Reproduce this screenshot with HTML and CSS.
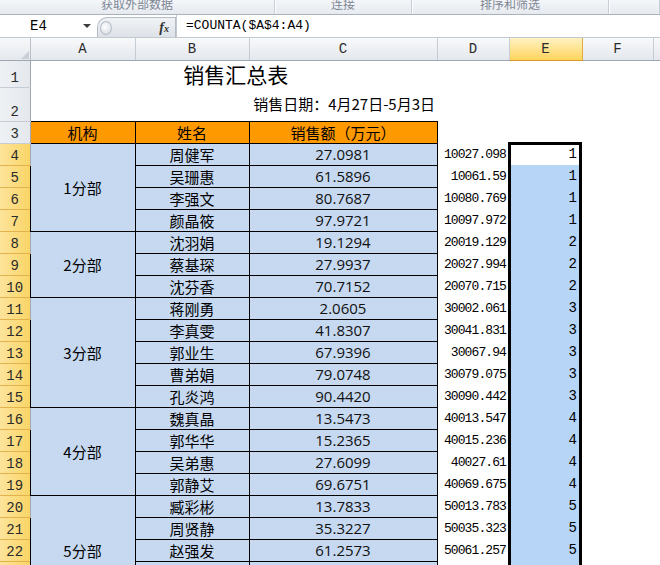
FILE: index.html
```html
<!DOCTYPE html>
<html lang="zh-CN">
<head>
    <meta charset="utf-8">
    <title>销售汇总表</title>
    <link rel="stylesheet" href="styles.css">
</head>
<body>
<div class="ribbon">
    <div class="group g1"><span>获取外部数据</span></div>
    <div class="group g2"><span>连接</span></div>
    <div class="group g3"><span>排序和筛选</span></div>
    <div class="group g4"></div>
</div>
<div class="formula-bar">
    <div class="name-box"><span>E4</span><i class="arrow"></i></div>
    <div class="fx-box"><span class="grip"></span><span class="fx">f<small>x</small></span></div>
    <div class="formula">=COUNTA($A$4:A4)</div>
</div>
<div class="sheet">
    <table>
        <colgroup>
            <col class="w-rh"><col class="w-a"><col class="w-b"><col class="w-c">
            <col class="w-d"><col class="w-e"><col class="w-f"><col class="w-g">
        </colgroup>
        <tr class="r-head">
            <th class="corner"><svg width="10" height="10" viewBox="0 0 10 10"><path d="M9 1 L9 9 L1 9 Z" fill="#c9cfd6"/></svg></th>
            <th class="ch">A</th><th class="ch">B</th><th class="ch">C</th><th class="ch">D</th>
            <th class="ch sel">E</th><th class="ch">F</th><th class="ch">G</th>
        </tr>
        <tr class="r1">
            <th class="rh">1</th>
            <td class="title" colspan="3">销售汇总表</td>
            <td></td><td></td><td></td><td></td>
        </tr>
        <tr class="r2">
            <th class="rh">2</th>
            <td class="date" colspan="3">销售日期：4月27日-5月3日</td>
            <td></td><td></td><td></td><td></td>
        </tr>
        <tr class="row">
            <th class="rh">3</th>
            <td class="b hd">机构</td><td class="b hd">姓名</td><td class="b hd">销售额（万元）</td>
            <td></td><td></td><td></td><td></td>
        </tr>
        <tr class="row">
            <th class="rh sel">4</th>
            <td class="b grp" rowspan="4">1分部</td>
            <td class="b name">周健军</td><td class="b num">27.0981</td>
            <td class="d">10027.098</td><td class="e cur">1</td><td></td><td></td>
        </tr>
        <tr class="row">
            <th class="rh sel">5</th>
            <td class="b name">吴珊惠</td><td class="b num">61.5896</td>
            <td class="d">10061.59</td><td class="e">1</td><td></td><td></td>
        </tr>
        <tr class="row">
            <th class="rh sel">6</th>
            <td class="b name">李强文</td><td class="b num">80.7687</td>
            <td class="d">10080.769</td><td class="e">1</td><td></td><td></td>
        </tr>
        <tr class="row">
            <th class="rh sel">7</th>
            <td class="b name">颜晶筱</td><td class="b num">97.9721</td>
            <td class="d">10097.972</td><td class="e">1</td><td></td><td></td>
        </tr>
        <tr class="row">
            <th class="rh sel">8</th>
            <td class="b grp" rowspan="3">2分部</td>
            <td class="b name">沈羽娟</td><td class="b num">19.1294</td>
            <td class="d">20019.129</td><td class="e">2</td><td></td><td></td>
        </tr>
        <tr class="row">
            <th class="rh sel">9</th>
            <td class="b name">蔡基琛</td><td class="b num">27.9937</td>
            <td class="d">20027.994</td><td class="e">2</td><td></td><td></td>
        </tr>
        <tr class="row">
            <th class="rh sel">10</th>
            <td class="b name">沈芬香</td><td class="b num">70.7152</td>
            <td class="d">20070.715</td><td class="e">2</td><td></td><td></td>
        </tr>
        <tr class="row">
            <th class="rh sel">11</th>
            <td class="b grp" rowspan="5">3分部</td>
            <td class="b name">蒋刚勇</td><td class="b num">2.0605</td>
            <td class="d">30002.061</td><td class="e">3</td><td></td><td></td>
        </tr>
        <tr class="row">
            <th class="rh sel">12</th>
            <td class="b name">李真雯</td><td class="b num">41.8307</td>
            <td class="d">30041.831</td><td class="e">3</td><td></td><td></td>
        </tr>
        <tr class="row">
            <th class="rh sel">13</th>
            <td class="b name">郭业生</td><td class="b num">67.9396</td>
            <td class="d">30067.94</td><td class="e">3</td><td></td><td></td>
        </tr>
        <tr class="row">
            <th class="rh sel">14</th>
            <td class="b name">曹弟娟</td><td class="b num">79.0748</td>
            <td class="d">30079.075</td><td class="e">3</td><td></td><td></td>
        </tr>
        <tr class="row">
            <th class="rh sel">15</th>
            <td class="b name">孔炎鸿</td><td class="b num">90.4420</td>
            <td class="d">30090.442</td><td class="e">3</td><td></td><td></td>
        </tr>
        <tr class="row">
            <th class="rh sel">16</th>
            <td class="b grp" rowspan="4">4分部</td>
            <td class="b name">魏真晶</td><td class="b num">13.5473</td>
            <td class="d">40013.547</td><td class="e">4</td><td></td><td></td>
        </tr>
        <tr class="row">
            <th class="rh sel">17</th>
            <td class="b name">郭华华</td><td class="b num">15.2365</td>
            <td class="d">40015.236</td><td class="e">4</td><td></td><td></td>
        </tr>
        <tr class="row">
            <th class="rh sel">18</th>
            <td class="b name">吴弟惠</td><td class="b num">27.6099</td>
            <td class="d">40027.61</td><td class="e">4</td><td></td><td></td>
        </tr>
        <tr class="row">
            <th class="rh sel">19</th>
            <td class="b name">郭静艾</td><td class="b num">69.6751</td>
            <td class="d">40069.675</td><td class="e">4</td><td></td><td></td>
        </tr>
        <tr class="row">
            <th class="rh sel">20</th>
            <td class="b grp" rowspan="5">5分部</td>
            <td class="b name">臧彩彬</td><td class="b num">13.7833</td>
            <td class="d">50013.783</td><td class="e">5</td><td></td><td></td>
        </tr>
        <tr class="row">
            <th class="rh sel">21</th>
            <td class="b name">周贤静</td><td class="b num">35.3227</td>
            <td class="d">50035.323</td><td class="e">5</td><td></td><td></td>
        </tr>
        <tr class="row">
            <th class="rh sel">22</th>
            <td class="b name">赵强发</td><td class="b num">61.2573</td>
            <td class="d">50061.257</td><td class="e">5</td><td></td><td></td>
        </tr>
        <tr class="row">
            <th class="rh sel">23</th>
            <td class="b name"></td><td class="b num"></td>
            <td class="d"></td><td class="e"></td><td></td><td></td>
        </tr>
        <tr class="row">
            <th class="rh sel">24</th>
            <td class="b name"></td><td class="b num"></td>
            <td class="d"></td><td class="e"></td><td></td><td></td>
        </tr>
    </table>
    <div class="selection"></div>
</div>
</body>
</html>
```

FILE: styles.css
```css
* {
    box-sizing: border-box;
}

body {
    margin: 0;
    width: 660px;
    height: 565px;
    overflow: hidden;
    background: #fff;
    font-family: "Noto Sans CJK SC", "Liberation Sans", sans-serif;
    color: #000;
}

/* ribbon strip (group captions only) */
.ribbon {
    display: flex;
    height: 15px;
    overflow: hidden;
    background: linear-gradient(#f4f6f9, #e6eaef);
    border-bottom: 1px solid #aab2bd;
}

.ribbon .group {
    display: flex;
    justify-content: center;
    border-right: 1px solid #c9cfd8;
    box-shadow: 1px 0 0 #fbfcfd;
}

.ribbon .group span {
    margin-top: -4px;
    font-size: 12px;
    line-height: 16px;
    color: #7d8794;
}

.g1 { width: 275px; }
.g2 { width: 137px; }
.g3 { width: 197px; }
.g4 { flex: 1; border-right: none; }

/* formula bar */
.formula-bar {
    display: flex;
    height: 23px;
    background: #fff;
    border-bottom: 1px solid #c3c9d1;
}

.name-box {
    width: 97px;
    display: flex;
    align-items: center;
    padding-left: 30px;
    font-family: "Liberation Mono", monospace;
    font-size: 14px;
}

.name-box span {
    flex: 1;
}

.name-box .arrow {
    width: 0;
    height: 0;
    margin-right: 6px;
    border-left: 4px solid transparent;
    border-right: 4px solid transparent;
    border-top: 4px solid #3d3d3d;
}

.fx-box {
    width: 79px;
    margin: 2px 0 0;
    display: flex;
    align-items: center;
    justify-content: space-between;
    padding: 0 6px 0 2px;
    background: linear-gradient(#f1f3f6, #dde2e8);
    border: 1px solid #b4bcc6;
    border-bottom: none;
    border-radius: 10px 0 0 0;
}

.grip {
    width: 12px;
    height: 14px;
    border-radius: 50%;
    border: 1px solid #b6bdc6;
    background: radial-gradient(circle at 40% 40%, #fdfdfe, #d3d8df);
}

.fx {
    font-family: "Liberation Serif", serif;
    font-style: italic;
    font-weight: bold;
    font-size: 14px;
    color: #333;
}

.fx small {
    font-size: 10px;
}

.formula {
    flex: 1;
    padding-left: 9px;
    font-family: "Liberation Mono", monospace;
    font-size: 13px;
    line-height: 22px;
    border-left: 1px solid #c3c9d1;
}

/* sheet grid */
.sheet {
    position: relative;
}

table {
    border-collapse: collapse;
    table-layout: fixed;
    width: 693px;
}

th, td {
    padding: 0;
    overflow: hidden;
    white-space: nowrap;
    font-weight: normal;
}

.w-rh { width: 30px; }
.w-a { width: 105px; }
.w-b { width: 114px; }
.w-c { width: 188px; }
.w-d { width: 72px; }
.w-e { width: 73px; }
.w-f { width: 71px; }
.w-g { width: 40px; }

.r-head { height: 22px; }
.r1 { height: 27px; }
.r2 { height: 34px; }
.row { height: 22px; }

.corner {
    text-align: right;
    vertical-align: bottom;
    line-height: 0;
    background: linear-gradient(#f7f8fa, #e4e8ed);
    border-right: 1px solid #b9c0c9;
    border-bottom: 1px solid #9ea7b2;
}

.ch {
    font-family: "Liberation Mono", monospace;
    font-size: 14px;
    color: #2b2b2b;
    background: linear-gradient(#f8f9fb, #e3e7ec);
    border-right: 1px solid #c6ccd4;
    border-bottom: 1px solid #9ea7b2;
}

.ch.sel {
    background: linear-gradient(#fff2c2, #ffd45c);
    border-right: 1px solid #e2ac3f;
    border-left: 1px solid #e2ac3f;
    border-bottom: 1px solid #d69a28;
}

.rh {
    font-family: "Liberation Mono", monospace;
    font-size: 14px;
    color: #2b2b2b;
    vertical-align: bottom;
    padding-bottom: 1px;
    background: linear-gradient(to right, #eef1f4, #e4e8ed);
    border-right: 1px solid #9ea7b2;
    border-bottom: 1px solid #c6ccd4;
}

.rh.sel {
    background: linear-gradient(to right, #fce39a, #f9d466);
    border-bottom: 1px solid #e2b34c;
}

.title {
    font-size: 21px;
    text-align: center;
    vertical-align: bottom;
    line-height: 26px;
    padding-left: 4px;
}

.date {
    font-size: 15px;
    text-align: right;
    vertical-align: middle;
    padding-right: 2px;
}

.b {
    border: 1px solid #000;
    text-align: center;
    background: #c6d9f0;
}

.hd {
    background: #ff9900;
    font-size: 15px;
}

.grp,
.name {
    font-size: 15px;
}

.num {
    font-family: "Open Sans", "Liberation Sans", sans-serif;
    font-size: 15px;
    color: #111;
}

.d {
    text-align: right;
    padding-right: 3px;
    font-family: "Liberation Mono", monospace;
    font-size: 13px;
    letter-spacing: -0.9px;
}

.e {
    text-align: right;
    padding-right: 5px;
    font-family: "Liberation Mono", monospace;
    font-size: 14px;
    background: #b7d5f6;
}

.e.cur {
    background: #fff;
}

/* active range outline, drawn over the cells */
.selection {
    position: absolute;
    left: 508px;
    top: 104px;
    width: 74px;
    height: 520px;
    border: 3px solid #000;
    pointer-events: none;
}
```
